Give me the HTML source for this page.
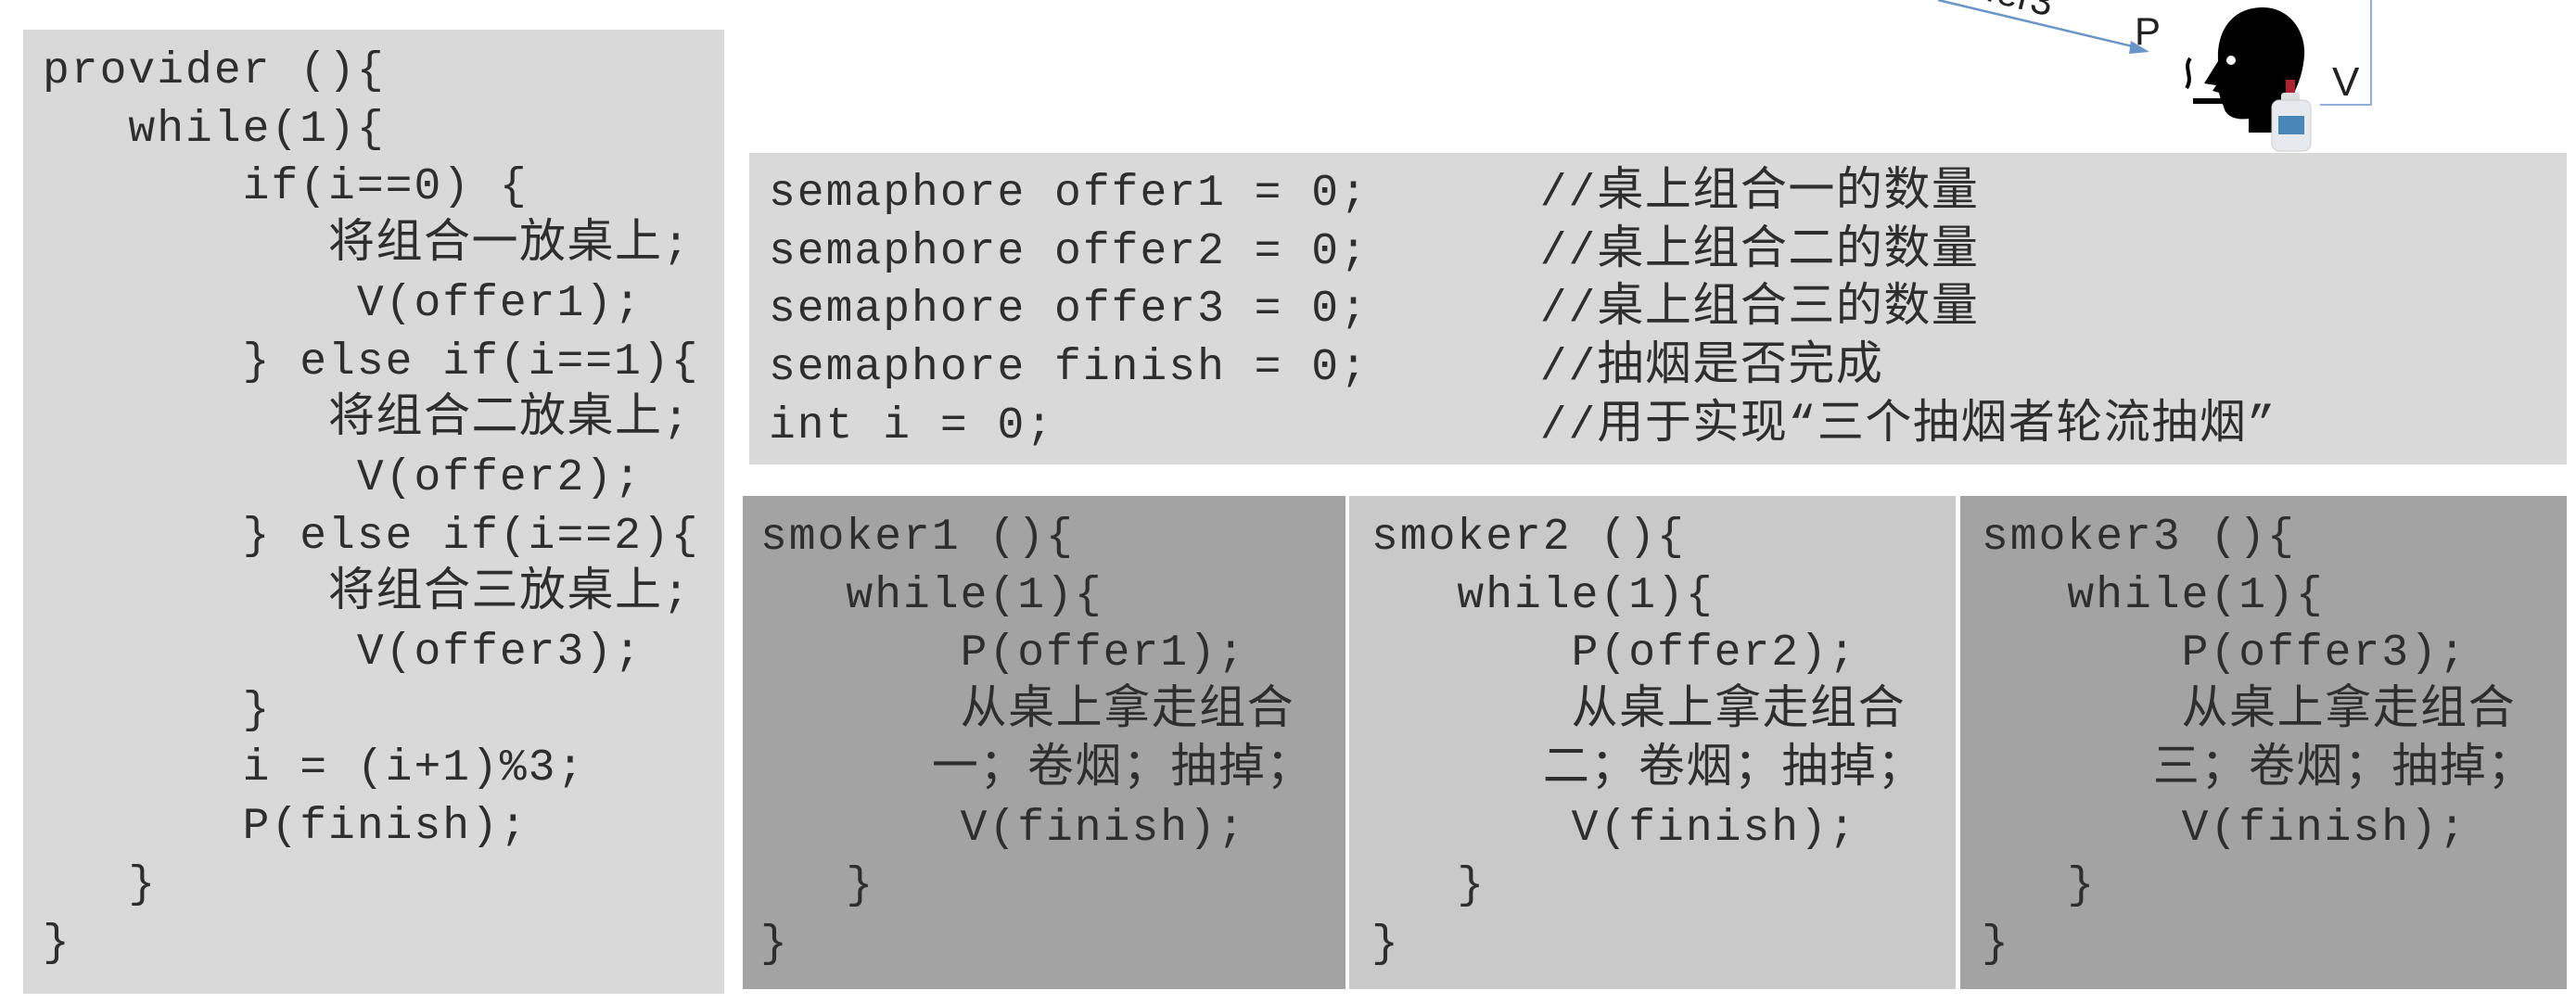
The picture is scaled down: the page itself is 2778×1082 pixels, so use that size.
<!DOCTYPE html>
<html><head><meta charset="utf-8">
<style>
html,body{margin:0;padding:0;background:#fff;}
body{width:2778px;height:1082px;position:relative;overflow:hidden;}
.box{position:absolute;box-sizing:border-box;}
pre{margin:0;font-family:"Liberation Mono","Noto Sans CJK SC",monospace;font-size:48px;letter-spacing:2px;line-height:62.7px;color:#2e2e2e;white-space:pre;}
.c{font-size:50px;letter-spacing:1.5px;line-height:0;}
</style></head><body>

<div class="box" style="left:25px;top:32px;width:756px;height:1040px;background:#d9d9d9;padding:14px 0 0 21px;">
<pre>provider (){
   while(1){
       if(i==0) {
          <span class="c">将组合一放桌上</span>;
           V(offer1);
       } else if(i==1){
          <span class="c">将组合二放桌上</span>;
           V(offer2);
       } else if(i==2){
          <span class="c">将组合三放桌上</span>;
           V(offer3);
       }
       i = (i+1)%3;
       P(finish);
   }
}</pre>
</div>

<div class="box" style="left:808px;top:165px;width:1960px;height:336px;background:#d9d9d9;padding:13px 0 0 21px;">
<pre>semaphore offer1 = 0;      //<span class="c">桌上组合一的数量</span>
semaphore offer2 = 0;      //<span class="c">桌上组合二的数量</span>
semaphore offer3 = 0;      //<span class="c">桌上组合三的数量</span>
semaphore finish = 0;      //<span class="c">抽烟是否完成</span>
int i = 0;                 //<span class="c">用于实现“三个抽烟者轮流抽烟”</span></pre>
</div>

<div class="box" style="left:801px;top:535px;width:650px;height:532px;background:#a3a3a3;padding:14px 0 0 19px;">
<pre>smoker1 (){
   while(1){
       P(offer1);
       <span class="c">从桌上拿走组合</span>
      <span class="c">一；卷烟；抽掉；</span>
       V(finish);
   }
}</pre>
</div>
<div class="box" style="left:1455px;top:535px;width:654px;height:532px;background:#c9c9c9;padding:14px 0 0 24px;">
<pre>smoker2 (){
   while(1){
       P(offer2);
       <span class="c">从桌上拿走组合</span>
      <span class="c">二；卷烟；抽掉；</span>
       V(finish);
   }
}</pre>
</div>
<div class="box" style="left:2114px;top:535px;width:654px;height:532px;background:#a3a3a3;padding:14px 0 0 23px;">
<pre>smoker3 (){
   while(1){
       P(offer3);
       <span class="c">从桌上拿走组合</span>
      <span class="c">三；卷烟；抽掉；</span>
       V(finish);
   }
}</pre>
</div>

<svg style="position:absolute;left:0;top:0" width="2778" height="170">
  <line x1="2090" y1="0" x2="2308" y2="52" stroke="#6a95c8" stroke-width="2.5"/>
  <polygon points="2318,56 2298,44 2296,58" fill="#6a95c8"/>
  <text x="2140" y="10" font-family="Liberation Sans" font-size="42" fill="#222" transform="rotate(14 2180 5)">fer3</text>
  <text x="2302" y="48" font-family="Liberation Sans" font-size="42" fill="#222">P</text>
  <text x="2515" y="103" font-family="Liberation Sans" font-size="44" fill="#222">V</text>
  <polyline points="2502,113 2557,113 2557,0" fill="none" stroke="#8fb0d8" stroke-width="2"/>
  <path d="M2377,90 L2392,66 C2390,30 2410,8 2440,8 C2470,8 2487,35 2485,60 C2483,90 2468,110 2462,125 L2462,143 L2425,143 L2425,128 C2410,130 2400,125 2398,115 L2395,108 L2393,100 L2386,98 L2390,92 Z" fill="#000"/>
  <rect x="2365" y="106" width="32" height="6" fill="#000"/>
  <path d="M2362,63 C2354,73 2366,83 2358,95" stroke="#000" stroke-width="4" fill="none"/>
  <circle cx="2406" cy="65" r="5" fill="#fff"/>
  <rect x="2465" y="86" width="10" height="18" fill="#b02030"/>
  <rect x="2460" y="100" width="20" height="10" fill="#ddd" rx="3"/>
  <rect x="2450" y="108" width="42" height="55" fill="#e6eaee" rx="8" stroke="#ccc"/>
  <rect x="2457" y="125" width="28" height="20" fill="#4a86b8"/>
</svg>
</body></html>
